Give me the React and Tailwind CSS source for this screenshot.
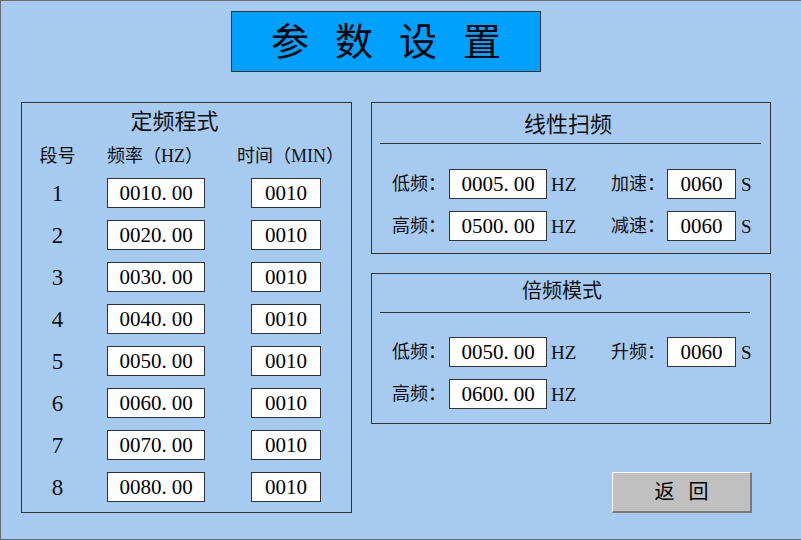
import React from 'react';

const FIXED_ROWS = [
    { seg: 1, freq: '0010.00', time: '0010' },
    { seg: 2, freq: '0020.00', time: '0010' },
    { seg: 3, freq: '0030.00', time: '0010' },
    { seg: 4, freq: '0040.00', time: '0010' },
    { seg: 5, freq: '0050.00', time: '0010' },
    { seg: 6, freq: '0060.00', time: '0010' },
    { seg: 7, freq: '0070.00', time: '0010' },
    { seg: 8, freq: '0080.00', time: '0010' },
];

const Num = ({ value }) => {
    const [a, b] = value.split('.');
    if (b === undefined) return <span>{value}</span>;
    return (
        <span>
            {a}<span className="mr-[5px]">.</span>{b}
        </span>
    );
};

const Box = ({ value, width }) => (
    <div className={`${width} h-[30px] shrink-0 border border-[#333] bg-white flex items-center justify-center text-[21px] leading-none text-black`}>
        <Num value={value} />
    </div>
);

const FieldRow = ({ label, value, label2, value2 }) => (
    <div className="flex items-center h-[30px] pl-[20px]">
        <span className="w-[57px] text-[18px] leading-none">{label}</span>
        <Box value={value} width="w-[98px]" />
        <span className="ml-[4px] w-[60px] text-[19px] leading-none">HZ</span>
        {label2 && (
            <>
                <span className="w-[56px] text-[18px] leading-none">{label2}</span>
                <Box value={value2} width="w-[69px]" />
                <span className="ml-[5px] text-[19px] leading-none">S</span>
            </>
        )}
    </div>
);

const App = () => {
    return (
        <div className="w-[801px] h-[540px] bg-[#A6CAF0] border-t border-l border-b border-[#6b6b6b] text-[#111] font-['Liberation_Serif','Noto_Sans_CJK_SC',serif] overflow-hidden">
            <div className="ml-[230px] mt-[10px] w-[310px] h-[61px] border border-[#333] bg-[#00A0FF] flex items-center justify-center gap-[26px] text-[38px] leading-none text-black">
                <span>参</span>
                <span>数</span>
                <span>设</span>
                <span>置</span>
            </div>

            <div className="flex mt-[30px] pl-[20px]">
                {/* 定频程式 */}
                <div className="w-[331px] h-[411px] shrink-0 border border-[#333]">
                    <div className="h-[38px] pr-[24px] flex items-center justify-center text-[22px] leading-none">定频程式</div>
                    <div className="h-[30px] flex items-center pl-[16px] text-[18px] leading-none whitespace-nowrap">
                        <span className="w-[39px] text-center">段号</span>
                        <span className="ml-[30px] w-[98px]">频率（HZ）</span>
                        <span className="ml-[32px]">时间（MIN）</span>
                    </div>
                    <div className="mt-[7px] flex flex-col gap-[12px]">
                        {FIXED_ROWS.map(row => (
                            <div key={row.seg} className="flex items-center h-[30px] pl-[16px]">
                                <span className="w-[39px] text-center text-[23px] leading-none">{row.seg}</span>
                                <div className="ml-[30px]"><Box value={row.freq} width="w-[98px]" /></div>
                                <div className="ml-[46px]"><Box value={row.time} width="w-[70px]" /></div>
                            </div>
                        ))}
                    </div>
                </div>

                <div className="ml-[19px] w-[400px] flex flex-col">
                    {/* 线性扫频 */}
                    <div className="h-[152px] border border-[#333]">
                        <div className="h-[40px] pt-[4px] pr-[6px] flex items-center justify-center text-[22px] leading-none">线性扫频</div>
                        <div className="ml-[8px] w-[381px] h-px bg-[#333]" />
                        <div className="mt-[25px] flex flex-col gap-[12px]">
                            <FieldRow label="低频：" value="0005.00" label2="加速：" value2="0060" />
                            <FieldRow label="高频：" value="0500.00" label2="减速：" value2="0060" />
                        </div>
                    </div>

                    {/* 倍频模式 */}
                    <div className="mt-[19px] h-[151px] border border-[#333]">
                        <div className="h-[38px] pb-[4px] pr-[18px] flex items-center justify-center text-[20px] leading-none">倍频模式</div>
                        <div className="ml-[8px] w-[370px] h-px bg-[#333]" />
                        <div className="mt-[24px] flex flex-col gap-[12px]">
                            <FieldRow label="低频：" value="0050.00" label2="升频：" value2="0060" />
                            <FieldRow label="高频：" value="0600.00" />
                        </div>
                    </div>

                    <button className="mt-[48px] ml-[241px] w-[140px] h-[41px] bg-[#C0C0C0] border-t border-l border-t-white border-l-white border-b-2 border-r-2 border-b-[#7a7a7a] border-r-[#7a7a7a] flex items-center justify-center gap-[14px] text-[20px] leading-none text-black">
                        <span>返</span>
                        <span>回</span>
                    </button>
                </div>
            </div>
        </div>
    );
};

export default App;
